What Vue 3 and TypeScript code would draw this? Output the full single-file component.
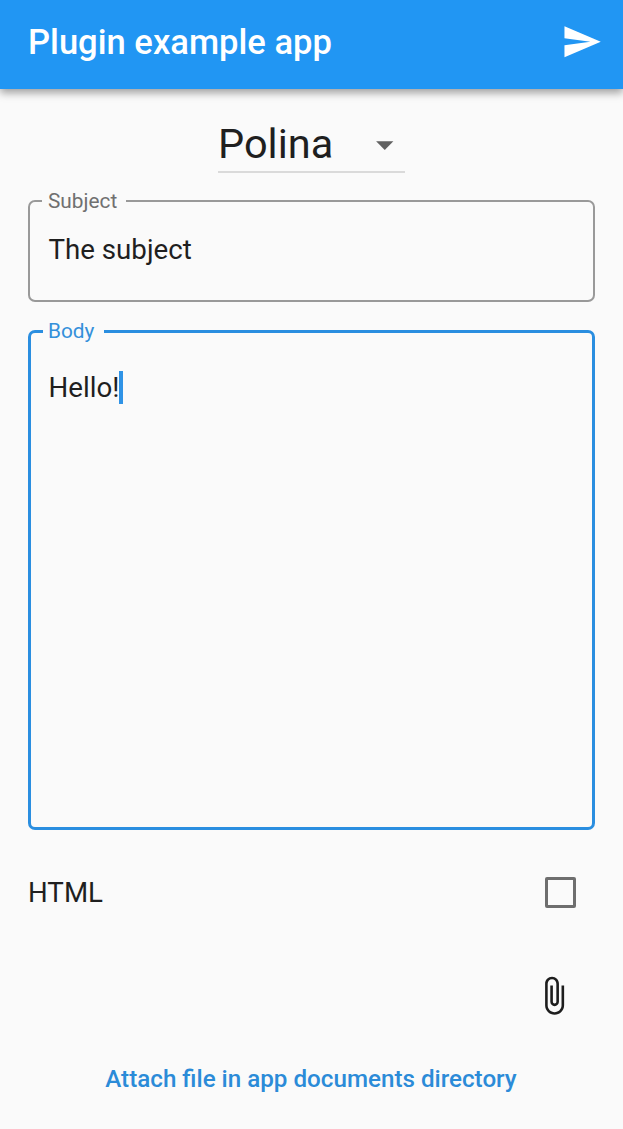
<script setup lang="ts">
import { ref } from 'vue'

const title = ref<string>('Plugin example app')
const recipient = ref<string>('Polina')
const subject = ref<string>('The subject')
const body = ref<string>('Hello!')
const isHtml = ref<boolean>(false)
</script>

<template>
  <div class="screen">
    <header class="app-bar">
      <h1 class="title">{{ title }}</h1>
      <svg class="icon send" viewBox="0 0 24 24" aria-label="Send">
        <path fill="#fff" d="M2.01 21L23 12 2.01 3 2 10l15 2-15 2z" />
      </svg>
    </header>
    <main class="content">
      <div class="dropdown">
        <span class="selected">{{ recipient }}</span>
        <svg class="icon arrow" viewBox="0 0 24 24" aria-hidden="true">
          <path fill="#616161" d="M7 10l5 5 5-5z" />
        </svg>
      </div>
      <fieldset class="field subject">
        <legend>Subject</legend>
        <div class="value">{{ subject }}</div>
      </fieldset>
      <fieldset class="field body">
        <legend>Body</legend>
        <div class="value">{{ body }}<span class="caret"></span></div>
      </fieldset>
      <div class="option" @click="isHtml = !isHtml">
        <span>HTML</span>
        <span class="checkbox" :class="{ checked: isHtml }"></span>
      </div>
      <div class="attach-row">
        <svg class="icon" viewBox="0 0 24 24" aria-label="Attach file">
          <path
            fill="#1d1d1d"
            d="M16.5 6v11.5c0 2.21-1.79 4-4 4s-4-1.79-4-4V5c0-1.38 1.12-2.5 2.5-2.5s2.5 1.12 2.5 2.5v10.5c0 .55-.45 1-1 1s-1-.45-1-1V6H10v9.5c0 1.38 1.12 2.5 2.5 2.5s2.5-1.12 2.5-2.5V5c0-2.21-1.79-4-4-4S7 2.79 7 5v12.5c0 3.04 2.46 5.5 5.5 5.5s5.5-2.46 5.5-5.5V6h-1.5z"
          />
        </svg>
      </div>
      <div class="attach-documents">Attach file in app documents directory</div>
    </main>
  </div>
</template>

<style>
body {
  margin: 0;
  background: #fafafa;
}
</style>

<style scoped>
.screen {
  box-sizing: border-box;
  height: 1129px;
  overflow: hidden;
  background: #fafafa;
  color: #1f1f1f;
  font-family: Roboto, sans-serif;
  font-size: 27.7px;
}
.icon {
  display: block;
  width: 41.5px;
  height: 41.5px;
  flex: none;
}
.app-bar {
  box-sizing: border-box;
  height: 89px;
  padding: 0 21px 7px 28px;
  display: flex;
  align-items: center;
  justify-content: space-between;
  background: #2196f3;
  box-shadow: 0 4px 8px rgba(0, 0, 0, 0.36);
}
.send {
  margin-top: 1px;
}
.title {
  margin: 0;
  padding-top: 2px;
  color: #fff;
  font-size: 34.6px;
  line-height: 42px;
  font-weight: 500;
}
.content {
  display: flex;
  flex-direction: column;
  padding: 27px 28px 0;
}
.dropdown {
  box-sizing: border-box;
  align-self: center;
  width: 187px;
  height: 57px;
  display: flex;
  align-items: center;
  justify-content: space-between;
  border-bottom: 2px solid #dadada;
}
.selected {
  font-size: 41.5px;
  line-height: 56px;
}
.arrow {
  margin: 2px 0 0;
}
.field {
  box-sizing: border-box;
  margin: 0;
  min-width: 0;
  border-radius: 7px;
}
.field legend {
  font-size: 20.8px;
  line-height: 24px;
  padding: 0 9px 0 6px;
}
.subject {
  height: 113px;
  margin-top: 16px;
  padding: 0 19px 0 12px;
  border: 2px solid #999;
}
.subject legend {
  color: #707070;
}
.value {
  display: flex;
  align-items: center;
  line-height: 32px;
}
.subject .value {
  padding: 21px 0 0 6.5px;
}
.body {
  height: 511px;
  margin-top: 17px;
  padding: 0 18px 0 12px;
  border: 3px solid #2a8ee0;
}
.body legend {
  color: #3490da;
  padding: 0 10px 0 5px;
}
.body .value {
  padding: 28px 0 0 5.5px;
}
.caret {
  width: 3.5px;
  height: 33px;
  background: #2f93e6;
}
.option {
  display: flex;
  align-items: center;
  justify-content: space-between;
  height: 32px;
  margin-top: 46px;
  padding-right: 19px;
}
.checkbox {
  box-sizing: border-box;
  width: 31px;
  height: 31px;
  border: 3px solid #6e6e6e;
  border-radius: 2px;
}
.checkbox.checked {
  background: #2196f3;
}
.attach-row {
  display: flex;
  justify-content: flex-end;
  margin-top: 67px;
  padding-right: 21px;
}
.attach-documents {
  margin-top: 47px;
  padding-right: 1px;
  text-align: center;
  color: #2b8bd8;
  font-size: 24.2px;
  line-height: 31px;
  font-weight: 500;
}
</style>
